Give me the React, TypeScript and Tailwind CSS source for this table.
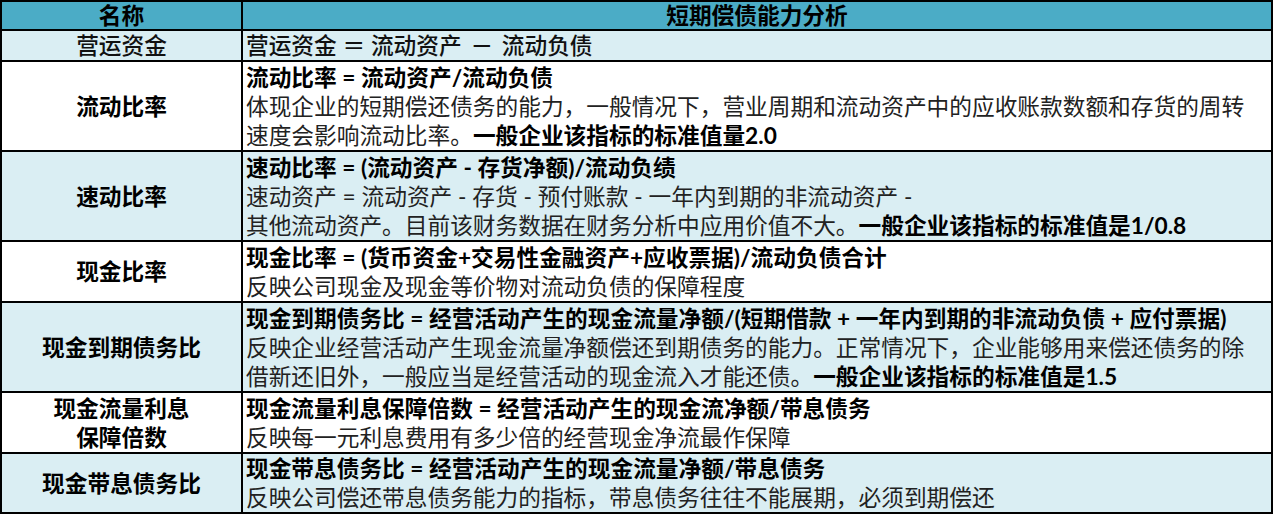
import type { ReactNode } from "react";

const font = {
  fontFamily: '"Lato", "Noto Sans CJK SC", "Noto Sans", sans-serif',
};

type Row = {
  name: ReactNode;
  bold?: boolean;
  light: boolean;
  h: string;
  lines: ReactNode[];
};

const rows: Row[] = [
  {
    name: "营运资金",
    bold: false,
    light: true,
    h: "h-[31px]",
    lines: [
      <span className="font-medium text-[#111]">
        营运资金 ＝ 流动资产 <span className="mx-[3px]">－</span> 流动负债
      </span>,
    ],
  },
  {
    name: "流动比率",
    light: false,
    h: "h-[90px]",
    lines: [
      <b className="font-bold text-black">流动比率 = 流动资产/流动负债</b>,
      <span>体现企业的短期偿还债务的能力，一般情况下，营业周期和流动资产中的应收账款数额和存货的周转</span>,
      <span>
        速度会影响流动比率。
        <b className="font-bold text-black">一般企业该指标的标准值量2.0</b>
      </span>,
    ],
  },
  {
    name: "速动比率",
    light: true,
    h: "h-[90px]",
    lines: [
      <b className="font-bold text-black">速动比率 = (流动资产 - 存货净额)/流动负绩</b>,
      <span>速动资产 = 流动资产 - 存货 - 预付账款 - 一年内到期的非流动资产 -</span>,
      <span>
        其他流动资产。目前该财务数据在财务分析中应用价值不大。
        <b className="font-bold text-black">一般企业该指标的标准值是1/0.8</b>
      </span>,
    ],
  },
  {
    name: "现金比率",
    light: false,
    h: "h-[61px]",
    lines: [
      <b className="font-bold text-black">现金比率 = (货币资金+交易性金融资产+应收票据)/流动负债合计</b>,
      <span>反映公司现金及现金等价物对流动负债的保障程度</span>,
    ],
  },
  {
    name: "现金到期债务比",
    light: true,
    h: "h-[90px]",
    lines: [
      <b className="font-bold text-black">
        现金到期债务比 = 经营活动产生的现金流量净额/(短期借款 + 一年内到期的非流动负债 + 应付票据)
      </b>,
      <span>反映企业经营活动产生现金流量净额偿还到期债务的能力。正常情况下，企业能够用来偿还债务的除</span>,
      <span>
        借新还旧外，一般应当是经营活动的现金流入才能还债。
        <b className="font-bold text-black">一般企业该指标的标准值是1.5</b>
      </span>,
    ],
  },
  {
    name: (
      <>
        现金流量利息
        <br />
        保障倍数
      </>
    ),
    light: false,
    h: "h-[61px]",
    lines: [
      <b className="font-bold text-black">现金流量利息保障倍数 = 经营活动产生的现金流净额/带息债务</b>,
      <span>反映每一元利息费用有多少倍的经营现金净流最作保障</span>,
    ],
  },
  {
    name: "现金带息债务比",
    light: true,
    h: "h-[60px]",
    lines: [
      <b className="font-bold text-black">现金带息债务比 = 经营活动产生的现金流量净额/带息债务</b>,
      <span>反映公司偿还带息债务能力的指标，带息债务往往不能展期，必须到期偿还</span>,
    ],
  },
];

export default function App() {
  return (
    <div className="w-[1274px] h-[516px] bg-white" style={font}>
      <div className="w-[1273px] border-t-2 border-l-2 border-black text-[22.7px] leading-[29px] text-[#222]">
        {/* Header */}
        <div className="flex h-[29px] bg-[#4bacc6] font-bold text-black">
          <div className="w-[241px] shrink-0 border-r-2 border-b-2 border-black flex items-center justify-center">
            名称
          </div>
          <div className="flex-1 border-r-2 border-b-2 border-black flex items-center justify-center">
            短期偿债能力分析
          </div>
        </div>

        {rows.map((r, i) => (
          <div key={i} className={`flex ${r.h} ${r.light ? "bg-[#daeef3]" : "bg-white"}`}>
            <div
              className={`w-[241px] shrink-0 border-r-2 border-b-2 border-black flex items-center justify-center text-center ${
                r.bold === false ? "font-medium text-[#111]" : "font-bold text-black"
              }`}
            >
              <div>{r.name}</div>
            </div>
            <div className="flex-1 border-r-2 border-b-2 border-black flex flex-col justify-center pl-[3px] whitespace-nowrap overflow-hidden">
              {r.lines.map((l, j) => (
                <div key={j}>{l}</div>
              ))}
            </div>
          </div>
        ))}
      </div>
    </div>
  );
}
